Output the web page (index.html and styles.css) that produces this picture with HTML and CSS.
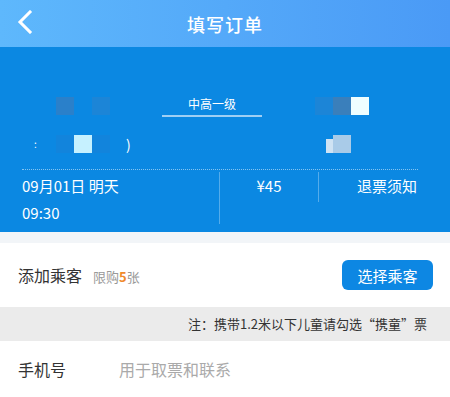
FILE: index.html
```html
<!DOCTYPE html>
<html>
<head>
  <meta charset="utf-8">
  <title>填写订单</title>
  <link rel="stylesheet" href="styles.css">
</head>
<body>
  <div class="header">
    <span class="back">
      <svg width="16" height="24" viewBox="0 0 16 24"><path d="M13 2 L3 12 L13 22" fill="none" stroke="#fff" stroke-width="3" stroke-linecap="square"/></svg>
    </span>
    <div class="title">填写订单</div>
  </div>

  <div class="ticket">
    <div class="route">
      <div class="station from">
        <div class="tiles first">
          <span class="tile t-dark"></span><span class="tile"></span><span class="tile t-mid"></span>
        </div>
        <div class="tiles second">
          <span class="dot">:</span><span class="tile t-faint"></span><span class="tile t-light"></span><span class="tile t-faint"></span><span class="paren">)</span>
        </div>
      </div>
      <div class="seat">
        <div class="seat-name">中高一级</div>
        <div class="seat-line"></div>
      </div>
      <div class="station to">
        <div class="tiles first">
          <span class="tile t-mid"></span><span class="tile t-dark2"></span><span class="tile t-white"></span>
        </div>
        <div class="tiles second">
          <span class="bit"></span><span class="tile t-pale"></span>
        </div>
      </div>
    </div>

    <div class="dotted"></div>

    <div class="info">
      <div class="info-date">09月01日 明天<br>09:30</div>
      <div class="info-price">¥45</div>
      <div class="info-refund">退票须知</div>
    </div>
  </div>

  <div class="gap"></div>

  <div class="row passenger">
    <span class="row-label">添加乘客</span>
    <span class="limit">限购<b>5</b>张</span>
    <button class="pick">选择乘客</button>
  </div>

  <div class="note">注：携带1.2米以下儿童请勾选“携童”票</div>

  <div class="row phone">
    <span class="row-label">手机号</span>
    <span class="placeholder">用于取票和联系</span>
  </div>
</body>
</html>
```

FILE: styles.css
```css
body {
  margin: 0;
  width: 450px;
  background: #fff;
  font-family: "Noto Sans CJK SC", "Noto Sans", sans-serif;
  color: #333;
}

.header {
  height: 47px;
  display: flex;
  align-items: center;
  justify-content: center;
  position: relative;
  background: linear-gradient(90deg, #5eb8fc, #4a9af6);
}
.header .back {
  position: absolute;
  left: 17px;
  top: 10px;
}
.title {
  color: #fff;
  font-size: 18px;
  font-weight: 500;
  letter-spacing: 1px;
}

.ticket {
  background: #0b88e2;
  color: #fff;
  padding-bottom: 8px;
}

.route {
  display: flex;
  padding-top: 50px;
  height: 68px;
}
.station.from { width: 162px; }
.station.to { flex: 1; }

.tiles {
  display: flex;
  align-items: center;
  height: 18px;
}
.tiles.second { margin-top: 20px; }
.from .tiles.first { padding-left: 56px; }
.from .tiles.second { padding-left: 34px; }
.to .tiles.first { padding-left: 53px; }
.to .tiles.second { padding-left: 64px; }

.tile {
  width: 18px;
  height: 18px;
}
.t-dark { background: #2a80ca; }
.t-mid { background: #1c85d7; }
.t-dark2 { background: #3a7fbb; }
.t-faint { background: #1284dc; }
.t-light { background: #c6f1ff; }
.t-white { background: #effeff; }
.t-pale { background: #a9cbe8; }
.dot {
  width: 22px;
  font-size: 10px;
  line-height: 18px;
}
.paren {
  margin-left: 16px;
  font-size: 14px;
  line-height: 18px;
}
.bit {
  width: 7px;
  height: 14px;
  margin-top: 4px;
  background: #cfe3f4;
}

.seat {
  width: 100px;
  text-align: center;
}
.seat-name {
  font-size: 12px;
  line-height: 14px;
}
.seat-line {
  height: 2px;
  margin-top: 4px;
  background: #9fcff4;
}

.dotted {
  margin: 4px 32px 0 22px;
  border-top: 1px dotted rgba(255, 255, 255, 0.5);
}

.info {
  display: flex;
  margin-top: 10px;
  font-size: 15px;
  line-height: 27px;
}
.info-date {
  width: 197px;
  padding-left: 22px;
  margin-top: -8px;
  border-right: 1px solid rgba(255, 255, 255, 0.3);
  height: 52px;
}
.info-price {
  width: 98px;
  text-align: center;
  margin-top: -8px;
  height: 30px;
  align-self: flex-start;
  border-right: 1px solid rgba(255, 255, 255, 0.3);
}
.info-refund {
  flex: 1;
  text-align: center;
  padding-left: 5px;
  margin-top: -8px;
}

.gap {
  height: 11px;
  background: #f2f5f8;
}

.row {
  display: flex;
  align-items: center;
  padding: 0 17px 0 18px;
}
.passenger { height: 64px; }
.row-label {
  font-size: 16px;
  color: #333;
}
.limit {
  margin-left: 11px;
  margin-top: 2px;
  font-size: 13px;
  color: #999;
}
.limit b {
  font-weight: bold;
  color: #f08a2c;
}
.pick {
  margin-left: auto;
  width: 91px;
  height: 30px;
  border: none;
  border-radius: 6px;
  background: #0d87e3;
  color: #fff;
  font-family: inherit;
  font-size: 15px;
  padding: 0;
}

.note {
  height: 34px;
  line-height: 34px;
  background: #ebebeb;
  text-align: right;
  padding-right: 23px;
  font-size: 13px;
  color: #333;
}

.phone { height: 56px; }
.placeholder {
  margin-left: 53px;
  font-size: 16px;
  color: #aaa;
}
```
